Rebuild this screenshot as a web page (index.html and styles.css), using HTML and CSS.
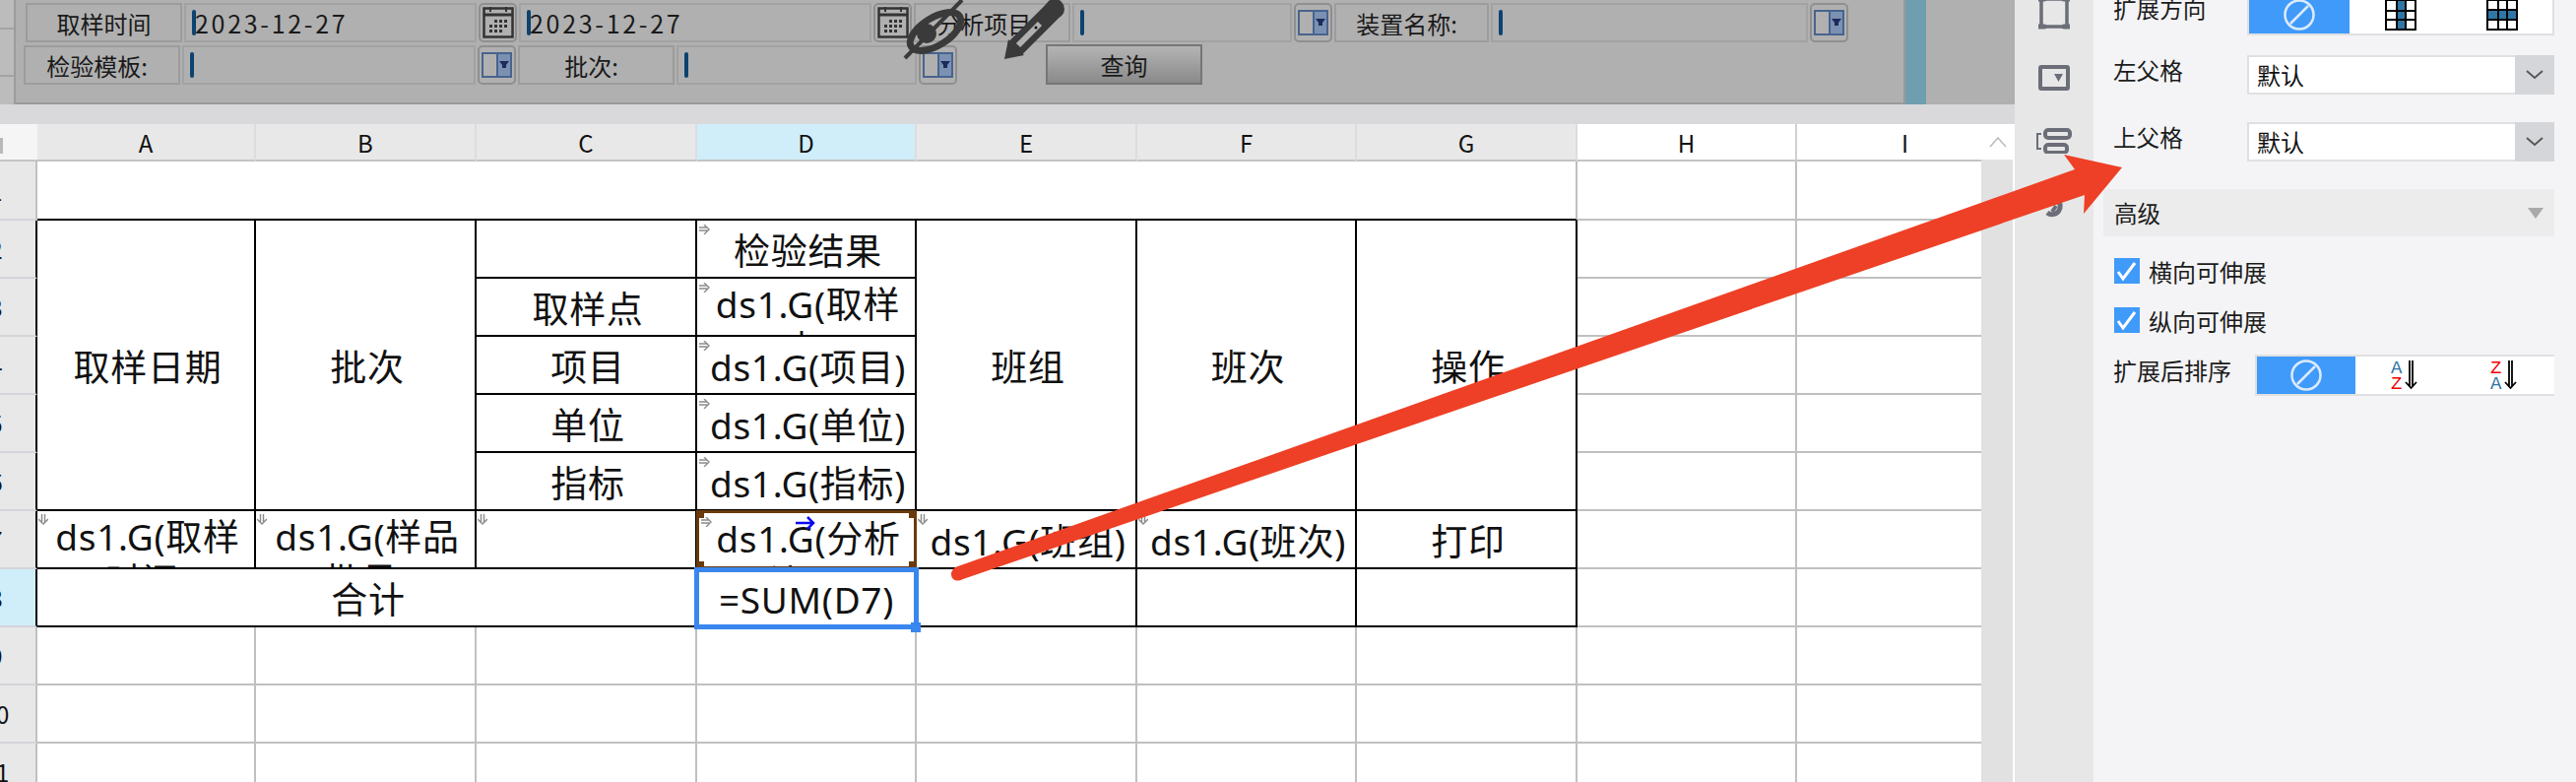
FILE: index.html
```html
<!DOCTYPE html>
<html lang="zh">
<head>
<meta charset="utf-8">
<title>报表设计</title>
<link rel="stylesheet" href="styles.css">
</head>
<body>
<svg class="defs" width="0" height="0">
  <symbol id="cal" viewBox="0 0 32 32">
    <rect x="1.5" y="1.5" width="29" height="29" fill="none" stroke="#333" stroke-width="2.5"/>
    <path d="M1 8h30" stroke="#333" stroke-width="3"/>
    <path d="M8 0v5M24 0v5" stroke="#333" stroke-width="2"/>
    <path d="M12 13h3v3h-3zM17 13h3v3h-3zM22 13h3v3h-3zM7 18h3v3H7zM12 18h3v3h-3zM17 18h3v3h-3zM22 18h3v3h-3zM7 23h3v3H7zM12 23h3v3h-3zM17 23h3v3h-3z" fill="#333"/>
  </symbol>
  <symbol id="combo" viewBox="0 0 31 26">
    <rect x="16" y="1" width="14" height="24" fill="#7b91b2"/>
    <rect x="1" y="1" width="29" height="24" fill="none" stroke="#47648f" stroke-width="2"/>
    <path d="M16 1v24" stroke="#47648f" stroke-width="2"/>
    <path d="M18 9h10l-3 4v3h-4v-3z" fill="#1d2a5c"/>
  </symbol>
  <symbol id="mr" viewBox="0 0 12 10">
    <path d="M0 3h8M0 6h8M5 0l5 5-5 5" fill="none" stroke="#8a8a8a" stroke-width="1.4"/>
  </symbol>
  <symbol id="md" viewBox="0 0 10 12">
    <path d="M3.500 0v8M6.500 0v8M0 5l5 5 5-5" fill="none" stroke="#8a8a8a" stroke-width="1.4"/>
  </symbol>
  <symbol id="none" viewBox="0 0 32 32">
    <circle cx="16" cy="16" r="14.500" fill="none" stroke="#dcebfb" stroke-width="2.500"/>
    <path d="M7 25L25 7" stroke="#dcebfb" stroke-width="2.500"/>
  </symbol>
</svg>

<div class="main">
  <div class="banner">
    <div class="gutter"></div>
    <div class="form">
      <div class="frow">
        <div class="flabel w159">取样时间</div>
        <div class="finput w297"><i class="caret"></i><span class="date">2023-12-27</span></div>
        <div class="fbtn"><svg class="calicon"><use href="#cal"/></svg></div>
        <div class="finput w358"><i class="caret"></i><span class="date">2023-12-27</span></div>
        <div class="fbtn"><svg class="calicon"><use href="#cal"/></svg></div>
        <div class="flabel w159 colon">分析项目:</div>
        <div class="finput w223"><i class="caret"></i></div>
        <div class="fbtn"><svg class="comboicon"><use href="#combo"/></svg></div>
        <div class="flabel w157 colon">装置名称:</div>
        <div class="finput w322"><i class="caret"></i></div>
        <div class="fbtn"><svg class="comboicon"><use href="#combo"/></svg></div>
      </div>
      <div class="frow second">
        <div class="flabel w159 colon">检验模板:</div>
        <div class="finput w298"><i class="caret"></i></div>
        <div class="fbtn"><svg class="comboicon"><use href="#combo"/></svg></div>
        <div class="flabel w159 colon">批次:</div>
        <div class="finput w244"><i class="caret"></i></div>
        <div class="fbtn"><svg class="comboicon"><use href="#combo"/></svg></div>
        <div class="query">查询</div>
      </div>
    </div>
    <div class="teal"></div>
    <div class="banner-end"></div>
  </div>
  <div class="strip"></div>
  <div class="sheet">
    <div class="grid">
      <div class="corner"></div>
      <div class="ch">A</div><div class="ch">B</div><div class="ch">C</div>
      <div class="ch on">D</div>
      <div class="ch">E</div><div class="ch">F</div><div class="ch">G</div>
      <div class="ch free">H</div><div class="ch free">I</div>

      <div class="rh">1</div>
      <div class="c bb span7"></div>
      <div class="c"></div><div class="c"></div>

      <div class="rh tb">2</div>
      <div class="c t rows5">取样日期</div>
      <div class="c t rows5">批次</div>
      <div class="c t"></div>
      <div class="c t"><svg class="mark r"><use href="#mr"/></svg>检验结果</div>
      <div class="c t rows5">班组</div>
      <div class="c t rows5">班次</div>
      <div class="c t rows5">操作</div>
      <div class="c"></div><div class="c"></div>

      <div class="rh tb">3</div>
      <div class="c t">取样点</div>
      <div class="c t"><svg class="mark r"><use href="#mr"/></svg>ds1.G(取样点)</div>
      <div class="c"></div><div class="c"></div>

      <div class="rh tb">4</div>
      <div class="c t">项目</div>
      <div class="c t"><svg class="mark r"><use href="#mr"/></svg>ds1.G(项目)</div>
      <div class="c"></div><div class="c"></div>

      <div class="rh tb">5</div>
      <div class="c t">单位</div>
      <div class="c t"><svg class="mark r"><use href="#mr"/></svg>ds1.G(单位)</div>
      <div class="c"></div><div class="c"></div>

      <div class="rh tb">6</div>
      <div class="c t">指标</div>
      <div class="c t"><svg class="mark r"><use href="#mr"/></svg>ds1.G(指标)</div>
      <div class="c"></div><div class="c"></div>

      <div class="rh tb">7</div>
      <div class="c t"><svg class="mark d"><use href="#md"/></svg>ds1.G(取样时间)</div>
      <div class="c t"><svg class="mark d"><use href="#md"/></svg>ds1.G(样品批号)</div>
      <div class="c t"><svg class="mark d"><use href="#md"/></svg></div>
      <div class="c t picked">
        <svg class="mark r"><use href="#mr"/></svg>
        <svg class="blue-arrow" viewBox="0 0 20 14"><path d="M0 7h18M12 1l6 6-6 6" fill="none" stroke="#0a0af0" stroke-width="2.500"/></svg>
        <i class="nub tl"></i><i class="nub tr"></i><i class="nub bl"></i><i class="nub br"></i>
        ds1.G(分析结果)
      </div>
      <div class="c t"><svg class="mark d"><use href="#md"/></svg>ds1.G(班组)</div>
      <div class="c t"><svg class="mark d"><use href="#md"/></svg>ds1.G(班次)</div>
      <div class="c t">打印</div>
      <div class="c"></div><div class="c"></div>

      <div class="rh tb on">8</div>
      <div class="c t span3">合计</div>
      <div class="c t selected">=SUM(D7)<i class="handle"></i></div>
      <div class="c t"></div><div class="c t"></div><div class="c t"></div>
      <div class="c"></div><div class="c"></div>

      <div class="rh">9</div>
      <div class="c"></div><div class="c"></div><div class="c"></div><div class="c"></div><div class="c"></div><div class="c"></div><div class="c"></div><div class="c"></div><div class="c"></div>
      <div class="rh">10</div>
      <div class="c"></div><div class="c"></div><div class="c"></div><div class="c"></div><div class="c"></div><div class="c"></div><div class="c"></div><div class="c"></div><div class="c"></div>
      <div class="rh">11</div>
      <div class="c"></div><div class="c"></div><div class="c"></div><div class="c"></div><div class="c"></div><div class="c"></div><div class="c"></div><div class="c"></div><div class="c"></div>
    </div>
    <div class="vscroll">
      <div class="vbtn"><svg class="vchev" viewBox="0 0 18 12"><path d="M1 11l8-9 8 9" fill="none" stroke="#bdbdbd" stroke-width="1.600"/></svg></div>
      <div class="vtrack"></div>
    </div>
  </div>
</div>

<div class="sidebar">
  <svg class="sicon first" viewBox="0 0 32 32"><rect x="3" y="1" width="26" height="28" fill="none" stroke="#6b6e78" stroke-width="3.500"/><path d="M0 1h6M26 1h6M0 29h6M26 29h6" stroke="#6b6e78" stroke-width="5" stroke-linecap="round"/></svg>
  <svg class="sicon drop" viewBox="0 0 32 26"><rect x="2" y="2" width="28" height="22" rx="1" fill="none" stroke="#6b6e78" stroke-width="4"/><path d="M16 9h9l-4.500 8z" fill="#6b6e78"/></svg>
  <svg class="sicon widget" viewBox="0 0 36 26"><path d="M5 6H1v15h4" fill="none" stroke="#6b6e78" stroke-width="2"/><rect x="9" y="2" width="25" height="8" rx="3" fill="none" stroke="#6b6e78" stroke-width="4"/><rect x="9" y="17" width="22" height="8" rx="3" fill="none" stroke="#6b6e78" stroke-width="4"/></svg>
  <svg class="sicon link" viewBox="0 0 24 24"><path d="M15 3a8 8 0 1 1-10 13" fill="none" stroke="#6b6e78" stroke-width="5"/><path d="M14 9l-4 6" stroke="#6b6e78" stroke-width="4"/></svg>
</div>

<div class="panel">
  <div class="prow p1">
    <div class="plabel">扩展方向</div>
    <div class="seg top">
      <div class="segbtn active"><svg class="segicon"><use href="#none"/></svg></div>
      <div class="segbtn">
        <svg class="segicon" viewBox="0 0 32 32"><rect x="12" y="1" width="9" height="30" fill="#2f76a6"/><path d="M1 1h30v30H1zM12 1v30M21 1v30M1 12h30M1 21h30" fill="none" stroke="#000" stroke-width="2"/></svg>
      </div>
      <div class="segbtn">
        <svg class="segicon" viewBox="0 0 32 32"><rect x="1" y="11" width="30" height="10" fill="#2f76a6"/><path d="M1 1h30v30H1zM12 1v30M21 1v30M1 11h30M1 21h30" fill="none" stroke="#000" stroke-width="2"/></svg>
      </div>
    </div>
  </div>
  <div class="prow p2">
    <div class="plabel">左父格</div>
    <div class="select"><span class="val">默认</span><span class="sarrow"><svg class="chev" viewBox="0 0 18 10"><path d="M1 1l8 7 8-7" fill="none" stroke="#555" stroke-width="1.800"/></svg></span></div>
  </div>
  <div class="prow p3">
    <div class="plabel">上父格</div>
    <div class="select"><span class="val">默认</span><span class="sarrow"><svg class="chev" viewBox="0 0 18 10"><path d="M1 1l8 7 8-7" fill="none" stroke="#555" stroke-width="1.800"/></svg></span></div>
  </div>
  <div class="adv"><span>高级</span><i class="tri"></i></div>
  <label class="check c1"><i class="box"><svg viewBox="0 0 26 26"><path d="M4 14l5 7L21 5" fill="none" stroke="#fff" stroke-width="3"/></svg></i>横向可伸展</label>
  <label class="check c2"><i class="box"><svg viewBox="0 0 26 26"><path d="M4 14l5 7L21 5" fill="none" stroke="#fff" stroke-width="3"/></svg></i>纵向可伸展</label>
  <div class="prow p4">
    <div class="plabel short">扩展后排序</div>
    <div class="seg sort">
      <div class="segbtn active"><svg class="segicon"><use href="#none"/></svg></div>
      <div class="segbtn">
        <svg class="sorticon" viewBox="0 0 30 30"><text class="az" x="0" y="13" fill="#2f76a6">A</text><text class="az" x="0" y="29" fill="#f00000">Z</text><path d="M19 0v27M22 0v27M15 22l5.500 6 5.500-6" fill="none" stroke="#000" stroke-width="1.800"/></svg>
      </div>
      <div class="segbtn">
        <svg class="sorticon" viewBox="0 0 30 30"><text class="az" x="0" y="13" fill="#f00000">Z</text><text class="az" x="0" y="29" fill="#2f76a6">A</text><path d="M19 0v27M22 0v27M15 22l5.500 6 5.500-6" fill="none" stroke="#000" stroke-width="1.800"/></svg>
      </div>
    </div>
  </div>
</div>

<svg class="overlay" viewBox="0 0 2616 794">
  <path d="M2155 170L2096 157L2107 172L970 576Q963 582 968 588Q972 591 978 588L2117 198L2116 217Z" fill="#ee4026"/>
  <g fill="none" stroke="#3a3a3a">
    <ellipse cx="950" cy="32" rx="29" ry="14" transform="rotate(-32 950 32)" stroke-width="7"/>
    <path d="M919 59L977 0" stroke-width="4"/>
    <path d="M1030 50L1070 10" stroke-width="19"/>
    <path d="M1034 46L1056 24" stroke="#b0b0b0" stroke-width="6"/>
  </g>
  <circle cx="941" cy="34" r="10" fill="#3a3a3a"/>
  <circle cx="1071" cy="9" r="10" fill="#3a3a3a"/>
  <path d="M1020 60L1024 40L1040 56Z" fill="#3a3a3a"/>
  <circle cx="1052" cy="28" r="1.500" fill="#111"/>
</svg>
</body>
</html>
```
FILE: styles.css
```css
* { box-sizing: border-box; }
html, body { margin: 0; height: 794px; overflow: hidden; }
body {
  display: flex;
  width: 2616px;
  position: relative;
  background: #f4f4f6;
  font-family: "Noto Sans CJK SC", "Noto Sans", sans-serif;
  color: #111;
}
.defs { position: absolute; }
.main { width: 2046px; flex: none; display: flex; flex-direction: column; height: 794px; overflow: hidden; }

/* banner */
.banner { height: 106px; flex: none; display: flex; background: #b0b0b0; }
.gutter {
  width: 16px; flex: none; background: #bcbcbc;
  border-right: 2px solid #9c9c9c;
  background-image: repeating-linear-gradient(to bottom, transparent 0 28px, #a4a4a4 28px 30px, transparent 30px 48px);
}
.form { width: 1919px; flex: none; border-bottom: 2px solid #9a9a9a; border-right: 2px solid #9a9a9a; padding: 3px 0 0 10px; background: #b0b0b0; }
.teal { width: 21px; flex: none; background: #6f9fae; }
.banner-end { flex: 1; background: #b0b0b0; }
.frow { display: flex; gap: 2px; height: 40px; font-size: 24px; color: #1a1a1a; }
.frow.second { margin-top: 3px; margin-left: -2px; }
.flabel {
  height: 40px; display: flex; align-items: center; justify-content: center;
  border: 2px solid #9c9c9c; background: #b0b0b0; flex: none;
}
.flabel.colon { padding-right: 10px; }
.finput {
  height: 40px; display: flex; align-items: center; gap: 0; padding-left: 6px;
  border: 2px solid #a2a2a2; flex: none; position: relative;
}
.w159 { width: 159px; } .w157 { width: 157px; } .w297 { width: 297px; } .w298 { width: 298px; }
.w358 { width: 358px; } .w223 { width: 223px; } .w322 { width: 322px; } .w244 { width: 244px; }
.caret { display: block; width: 4px; height: 26px; border-radius: 2px; background: #0c4371; flex: none; }
.date { letter-spacing: 2.700px; margin-left: -1px; font-size: 25px; }
.fbtn {
  width: 39px; height: 40px; flex: none; display: flex; align-items: center; justify-content: center;
  border: 2px solid #8f8f8f; border-radius: 5px;
}
.calicon { width: 32px; height: 32px; display: block; }
.comboicon { width: 31px; height: 26px; display: block; }
.query {
  width: 159px; height: 41px; margin-left: 88px; margin-top: -1px;
  border: 2px solid #767676;
  background: linear-gradient(#b4b4b4, #8a8a8a);
  display: flex; align-items: center; justify-content: center;
}
.strip { height: 20px; flex: none; background: #d9d9dc; }

/* sheet */
.sheet { flex: 1; display: flex; min-height: 0; overflow: hidden; margin-left: -44px; position: relative; }
.grid {
  flex: none;
  display: grid;
  grid-template-columns: 82px 222px 224px 224px 223px 224px 223px 224px 223px 221px;
  grid-template-rows: 38px 60px repeat(10, 59px);
  background: #fff;
}
.corner {
  background: #f5f5f5 linear-gradient(#b9b9b9, #b9b9b9) 44px 14px / 3px 16px no-repeat;
  border-bottom: 2px solid #c4c4c4;
}
.ch {
  display: flex; align-items: center; justify-content: center;
  background: #e8e8e8; font-size: 24px;
  border-right: 2px solid #dcdce2; border-bottom: 2px solid #c4c4c4;
}
.ch.on { background: #cfeefa; }
.ch.free { background: #fff; border-right-color: #d0d0d0; }
.rh {
  display: flex; align-items: center; justify-content: center;
  background: #e8e8e8; font-size: 24px;
  border-right: 2px solid #c0c0c0; border-bottom: 2px solid #d4d4da;
}
.rh.tb { border-right-color: #000; }
.rh.on { background: #cfeefa; }
.c {
  position: relative; overflow: hidden;
  display: flex; align-items: safe center; justify-content: center;
  text-align: center;
  font-family: "Noto Sans", "Noto Sans CJK SC", sans-serif;
  font-size: 37px; line-height: 45px; letter-spacing: .7px; color: #111;
  padding: 3px 0 0 4px;
  border-right: 2px solid #c0c0c0; border-bottom: 2px solid #c0c0c0;
}
.c.t { border-right-color: #000; border-bottom-color: #000; }
.c.bb { border-bottom-color: #000; }
.span7 { grid-column: span 7; }
.span3 { grid-column: span 3; }
.rows5 { grid-row: span 5; }
.mark { position: absolute; left: 2px; top: 3px; }
.mark.r { width: 12px; height: 10px; left: 2px; top: 4px; }
.mark.d { width: 10px; height: 12px; left: 1px; top: 3px; }
.c.picked { border: 3px solid #6a3a0c; margin: -1px 0 0 -1px; }
.nub { position: absolute; width: 5px; height: 5px; background: #6a3a0c; }
.nub.tl { left: 0; top: 0; } .nub.tr { right: 0; top: 0; }
.nub.bl { left: 0; bottom: 0; } .nub.br { right: 0; bottom: 0; }
.blue-arrow { position: absolute; width: 20px; height: 14px; left: 98px; top: 3px; }
.c.selected { overflow: visible; border: 5px solid #3a86ef; margin: -2px -2px -2px -3px; z-index: 2; padding: 2px 0 0; }
.handle { position: absolute; right: -7px; bottom: -8px; width: 10px; height: 10px; background: #3a86ef; }

.vscroll { position: absolute; right: 0; top: 0; bottom: 0; width: 34px; display: flex; flex-direction: column; background: #fff; z-index: 3; }
.vbtn { height: 32px; margin-top: 2px; display: flex; align-items: center; justify-content: center; background: #fff; flex: none; }
.vchev { width: 18px; height: 12px; }
.vtrack { flex: 1; background: #e1e1e1; margin-right: 2px; margin-top: 2px; }

/* sidebar */
.sidebar { width: 80px; flex: none; background: #e7e7e7; display: flex; flex-direction: column; align-items: center; height: 794px; }
.sicon { display: block; flex: none; }
.sicon.first { width: 32px; height: 32px; margin-top: -2px; }
.sicon.drop { width: 32px; height: 26px; margin-top: 36px; }
.sicon.widget { width: 36px; height: 26px; margin-top: 38px; }
.sicon.link { width: 24px; height: 24px; margin-top: 44px; }

/* panel */
.panel { flex: 1; padding: 0 22px 0 21px; background: #f4f4f6; font-size: 23.600px; color: #1c1c1c; }
.prow { display: flex; }
.plabel { width: 135px; flex: none; line-height: 32px; margin-left: -1px; padding-right: 0; }
.plabel.short { width: 143px; }
.p1 { height: 36px; margin-top: -8px; align-items: flex-start; }
.p2 { height: 40px; margin-top: 28px; }
.p3 { height: 40px; margin-top: 28px; }
.p1 .seg { margin-top: 8px; }
.p2 .plabel, .p3 .plabel { margin-top: -1px; }
.seg { flex: 1; display: flex; background: #fff; border: 2px solid #e0e0e2; border-top: 0; margin-left: 1px; }
.seg.top { height: 36px; }
.segbtn { flex: 1; display: flex; align-items: center; justify-content: center; background: #fff; overflow: hidden; }
.segbtn.active { background: #409af9; flex: none; width: 102px; }
.segicon { width: 32px; height: 32px; display: block; }
.seg.top .segicon { margin-top: -4px; }
.select { flex: 1; height: 40px; display: flex; background: #fff; border: 2px solid #e0e0e2; margin-left: 1px; }
.val { flex: 1; padding-left: 8px; line-height: 36px; color: #111; font-size: 24px; }
.sarrow { margin: -2px -2px -2px 0; width: 40px; background: #d5d6da; display: flex; align-items: center; justify-content: center; }
.chev { width: 18px; height: 10px; }
.adv {
  height: 48px; margin: 28px 0 0 -11px; padding: 0 11px; background: #ececec;
  display: flex; align-items: center; justify-content: space-between;
}
.tri { width: 0; height: 0; border: 8px solid transparent; border-top: 11px solid #a9a9a9; border-bottom: 0; }
.check { display: flex; align-items: center; height: 26px; gap: 9px; font-size: 24px; }
.c1 { margin-top: 22px; }
.c2 { margin-top: 24px; }
.box { width: 26px; height: 26px; background: #409af9; display: block; flex: none; }
.box svg { display: block; width: 26px; height: 26px; }
.p4 { margin-top: 22px; height: 42px; }
.p4 .plabel { line-height: 32px; font-size: 24px; }
.seg.sort { height: 42px; border-top: 2px solid #e0e0e2; border-right: 0; }
.seg.sort .segbtn.active { width: 100px; }
.sorticon { width: 30px; height: 30px; display: block; }
.az { font-family: "Liberation Mono", monospace; font-size: 19px; }

.overlay { position: absolute; left: 0; top: 0; width: 2616px; height: 794px; pointer-events: none; z-index: 5; }
```
